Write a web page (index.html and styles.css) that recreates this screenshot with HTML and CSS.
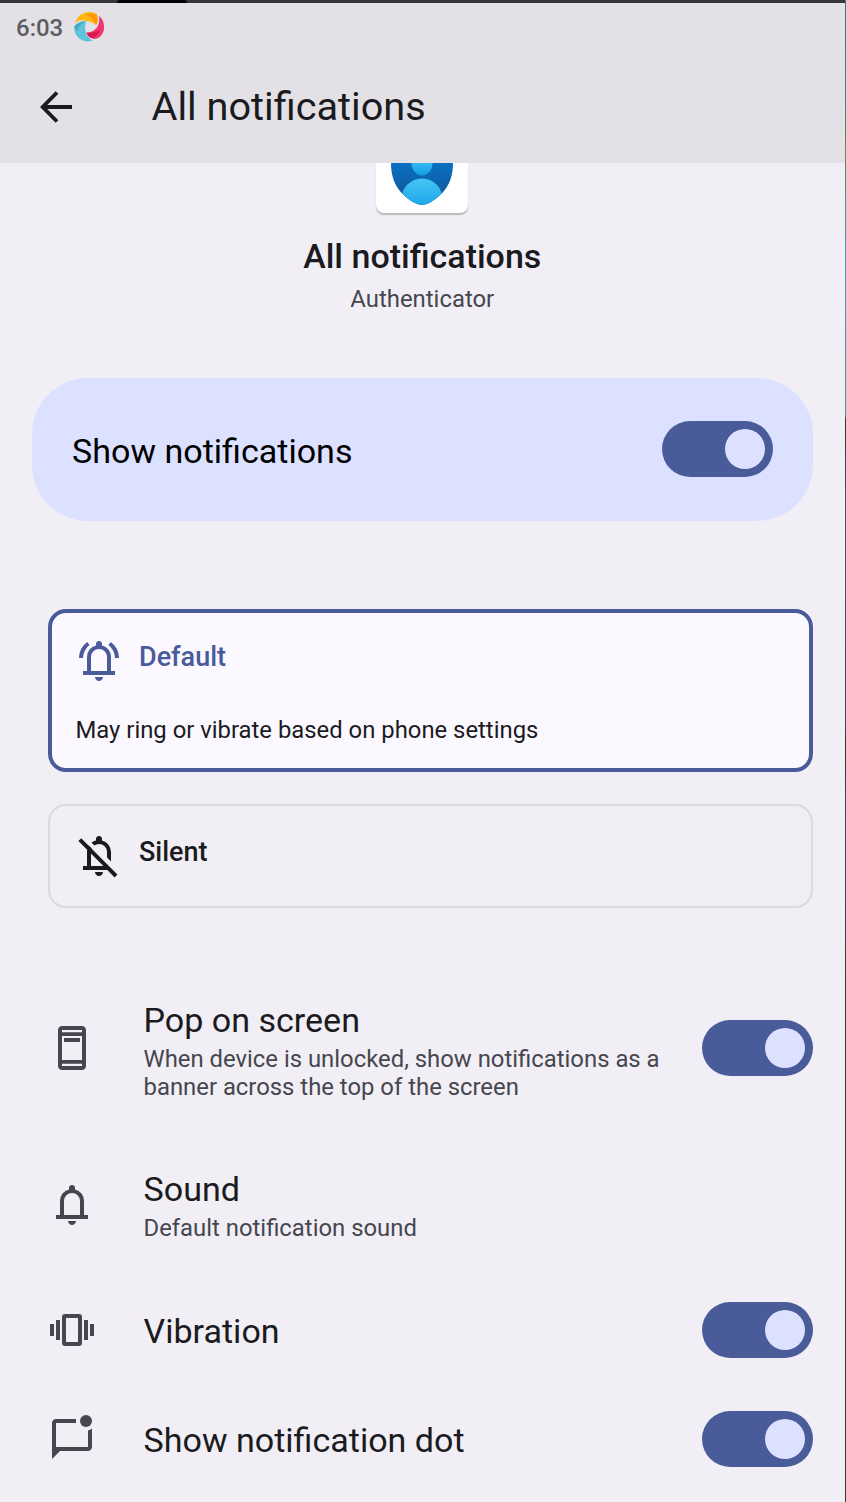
FILE: index.html
```html
<!DOCTYPE html>
<html lang="en">
<head>
<meta charset="utf-8">
<title>All notifications</title>
<link rel="stylesheet" href="styles.css">
</head>
<body>
<div class="screen">
  <header class="topbar">
    <div class="bezel"><span class="camera"></span></div>
    <div class="status">
      <span class="clock">6:03</span>
      <svg class="swirl" viewBox="0 0 30 30">
        <path fill="#fdb813" d="M1 11.500C3 4 9 0 15 0c4 0 6.500 1 7.700 2.500C24 6 24 10 22 13.500 20.500 11 17 9.500 12 9 8 7.500 4 8.500 1 11.500Z"/>
        <path fill="#ff9800" d="M11 3c4-2 9-2 11.700-.5C24 6 24 10 22 13.500 20.500 8 16 4 11 3Z"/>
        <path fill="#5fc3dc" d="M12 9.500C7 9 2.500 11 0 15c0 9 8 17 19 13.800C12 25 9.500 18 12 9.500Z"/>
        <path fill="#43a9c4" d="M12 9.500C7 9 2.500 11 0 15c2 1 3 3 3.500 6C4 15 7 11 12 9.500Z"/>
        <path fill="#f0366e" d="M25 4c4 3 5.500 8 5 13-1 6-5 10-10 10-4-1-6.500-3.500-7.500-6.500C20 21 27 14 25 4Z"/>
        <path fill="#d81b4e" d="M12.500 20.500c6 1 12-1 13.500-4-1 6-4 9-9 9.500-2.500-1-4-3.500-4.500-5.500Z"/>
      </svg>
    </div>
    <div class="toolbar">
      <svg class="back" viewBox="0 0 32 32"><path fill="none" stroke="#1b1b1f" stroke-width="3.8" d="M17 1.5 2.7 16 17 30.5M3 16h29"/></svg>
      <h1 class="title">All notifications</h1>
    </div>
  </header>

  <section class="app">
    <div class="app-icon">
      <svg class="shield" viewBox="0 0 62 43">
        <defs>
          <linearGradient id="navy" x1="0" y1="0" x2="0" y2="1"><stop offset="0" stop-color="#0a70c4"/><stop offset="1" stop-color="#14518f"/></linearGradient>
          <linearGradient id="sky" x1="0" y1="0" x2="0" y2="1"><stop offset="0" stop-color="#45c5f5"/><stop offset=".7" stop-color="#1ba4ea"/></linearGradient>
          <linearGradient id="head" x1="0" y1="0" x2="0" y2="1"><stop offset="0" stop-color="#35b9f0"/><stop offset="1" stop-color="#129ce6"/></linearGradient>
          <clipPath id="body"><path d="M0 0h62C62 22 51 32 40 39q-9 6-18 0C11 32 0 22 0 0Z"/></clipPath>
        </defs>
        <g clip-path="url(#body)">
          <path fill="url(#navy)" d="M0 0h62v43H0z"/>
          <path fill="url(#head)" d="M20.5 0h21a10.5 12.5 0 0 1-21 0Z"/>
          <circle cx="31" cy="36" r="20.5" fill="url(#sky)"/>
        </g>
      </svg>
    </div>
    <h2 class="app-title">All notifications</h2>
    <p class="app-name">Authenticator</p>
  </section>

  <section class="main-switch">
    <span class="main-label">Show notifications</span>
    <span class="toggle"></span>
  </section>

  <section class="choices">
    <div class="choice selected">
      <div class="choice-head">
        <svg class="icon" viewBox="0 0 24 24"><path d="M4 19v-2h2v-7q0-2.075 1.25-3.688Q8.5 4.7 10.5 4.2v-.7q0-.625.438-1.063Q11.375 2 12 2t1.062.437Q13.5 2.875 13.5 3.5v.7q2 .5 3.25 2.112Q18 7.925 18 10v7h2v2Zm8 3q-.825 0-1.412-.587Q10 20.825 10 20h4q0 .825-.587 1.413Q12.825 22 12 22Zm-4-5h8v-7q0-1.65-1.175-2.825Q13.65 6 12 6q-1.65 0-2.825 1.175Q8 8.35 8 10ZM2 10.5q0-2.5 1.113-4.588Q4.225 3.825 6.1 2.45l1.175 1.6q-1.5 1.1-2.387 2.775Q4 8.5 4 10.5Zm18 0q0-2-.887-3.675-.888-1.675-2.388-2.775l1.175-1.6q1.875 1.375 2.987 3.462Q22 8 22 10.500Z"/></svg>
        <span class="choice-label">Default</span>
      </div>
      <p class="choice-text">May ring or vibrate based on phone settings</p>
    </div>
    <div class="choice">
      <div class="choice-head">
        <svg class="icon" viewBox="0 0 24 24"><path d="M4 19v-2h2v-7q0-.9.2-1.75T6.950 6.700L8.450 8.200Q8.200 8.650 8.100 9.100T8 10v7h6.200L1.700 4.500l1.400-1.400 18.100 18.200-1.400 1.400L16.150 19ZM18 14.800l-2-2V10q0-1.650-1.175-2.825T12 6q-.65 0-1.250.2T9.700 6.700L8.200 5.300q.5-.4 1.100-.7t1.200-.4v-.7q0-.625.438-1.063T12 2t1.062.437T13.500 3.500v.7q2 .5 3.250 2.113T18 10Zm-6 7.200q-.825 0-1.412-.587Q10 20.825 10 20h4q0 .825-.587 1.413Q12.825 22 12 22Z"/></svg>
        <span class="choice-label">Silent</span>
      </div>
    </div>
  </section>

  <section class="list">
    <div class="row row-pop">
      <svg class="icon" viewBox="0 0 24 24"><path fill-rule="evenodd" d="M7 1h10q.825 0 1.412.588Q19 2.175 19 3v18q0 .825-.588 1.412Q17.825 23 17 23H7q-.825 0-1.412-.588Q5 21.825 5 21V3q0-.825.588-1.412Q6.175 1 7 1Zm0 2v1.100h10V3Zm0 3v12h10V6Zm0 13.900V21h10v-1.100ZM8 7h8v2H8Z"/></svg>
      <div class="words"><div class="name">Pop on screen</div><div class="detail">When device is unlocked, show notifications as a<br>banner across the top of the screen</div></div>
      <span class="toggle"></span>
    </div>
    <div class="row row-sound">
      <svg class="icon" viewBox="0 0 24 24"><path d="M4 19v-2h2v-7q0-2.075 1.25-3.688Q8.500 4.700 10.500 4.200v-.7q0-.625.438-1.063Q11.375 2 12 2t1.062.437Q13.500 2.875 13.500 3.500v.7q2 .5 3.250 2.112Q18 7.925 18 10v7h2v2Zm8 3q-.825 0-1.412-.587Q10 20.825 10 20h4q0 .825-.587 1.413Q12.825 22 12 22Zm-4-5h8v-7q0-1.650-1.175-2.825Q13.650 6 12 6q-1.650 0-2.825 1.175Q8 8.350 8 10Z"/></svg>
      <div class="words"><div class="name">Sound</div><div class="detail">Default notification sound</div></div>
    </div>
    <div class="row row-vibration">
      <svg class="icon" viewBox="0 0 24 24"><path fill-rule="evenodd" d="M1 9h2v6H1Zm3-2h2v10H4Zm14 0h2v10h-2Zm3 2h2v6h-2ZM8.500 4h7A1.500 1.500 0 0 1 17 5.500v13a1.500 1.500 0 0 1-1.500 1.500h-7A1.500 1.500 0 0 1 7 18.500v-13A1.500 1.500 0 0 1 8.500 4ZM9 6v12h6V6Z"/></svg>
      <div class="words"><div class="name">Vibration</div></div>
      <span class="toggle"></span>
    </div>
    <div class="row row-dot">
      <svg class="icon" viewBox="0 0 24 24"><path d="M2 22V4q0-.825.588-1.412Q3.175 2 4 2h10v2H4v12h16V7.800q1.150-.300 2-1V16q0 .825-.588 1.412Q20.825 18 20 18H6Z"/><circle cx="19" cy="3" r="3"/></svg>
      <div class="words"><div class="name">Show notification dot</div></div>
      <span class="toggle"></span>
    </div>
  </section>
  <div class="edge"></div>
</div>
</body>
</html>
```
FILE: styles.css
```css
* { box-sizing: border-box; }
body { margin: 0; font-family: Roboto, "Liberation Sans", sans-serif; color: #1b1b1f; }
h1, h2, p { margin: 0; font-weight: 400; }
.screen { position: relative; width: 846px; height: 1502px; overflow: hidden; background: #f1eff5; }
.topbar { height: 162.5px; background: #e3e1e6; }
.bezel { height: 3px; background: #36373b; padding-left: 117px; }
.camera { display: block; width: 70px; height: 3px; background: #000; border-radius: 8px 8px 0 0; }
.status { display: flex; align-items: center; height: 48px; padding-left: 16px; }
.clock { width: 58px; font-size: 24px; line-height: 28px; font-weight: 500; color: #5d5c60; margin-top: 2px; }
.swirl { width: 30px; height: 30px; overflow: visible; }
.toolbar { display: flex; align-items: center; height: 111.5px; padding-left: 40px; }
.back { width: 32px; height: 32px; }
.title { margin-left: 79.5px; font-size: 39.7px; line-height: 48px; }

.app { display: flex; flex-direction: column; align-items: center; height: 215.5px; padding-right: 1.5px; }
.app-icon { width: 92px; height: 50.5px; background: #fff; border-radius: 0 0 8px 8px; box-shadow: 0 1.5px 1px #b9b8bd; display: flex; justify-content: center; }
.shield { width: 62px; height: 43px; }
.app-title { margin-top: 23px; font-size: 34px; line-height: 40px; font-weight: 500; }
.app-name { margin-top: 9px; font-size: 23.9px; line-height: 28px; color: #46464f; }

.main-switch { display: flex; align-items: center; justify-content: space-between; margin: 0 33px 0 32px; height: 143px; padding: 0 40px 1px; border-radius: 56px; background: #dce1ff; color: #000; }
.main-label { font-size: 34.05px; line-height: 40px; padding-top: 4px; }
.toggle { flex: none; display: flex; align-items: center; justify-content: flex-end; width: 111px; height: 56px; padding-right: 8px; border-radius: 28px; background: #495b99; }
.toggle::after { content: ""; width: 40px; height: 40px; border-radius: 50%; background: #dce1ff; }

.choices { display: flex; flex-direction: column; gap: 32px; margin: 88px 33px 0 48px; }
.choice { height: 104px; border: 2px solid #dadae0; border-radius: 18px; padding: 26px 26px; }
.choice.selected { height: 163px; border: 4px solid #495b99; padding: 24px 24px; background: #fbf8ff; }
.choice-head { display: flex; }
.icon { flex: none; width: 48px; height: 48px; fill: currentColor; }
.choice-head .icon { margin-left: -1px; }
.choice-label { margin-left: 16px; padding-top: 5px; font-size: 27px; line-height: 30px; font-weight: 500; }
.selected .choice-head { color: #495b99; }
.choice-text { margin-top: 31px; margin-left: -0.5px; font-size: 23.85px; line-height: 28px; }

.list { margin: 66px 33px 0 48px; }
.row { display: flex; align-items: center; color: #46464f; }
.row .icon { margin-left: -0.5px; }
.words { flex: 1; margin-left: 48px; padding-top: 2px; }
.name { font-size: 34.05px; line-height: 40px; color: #1b1b1f; }
.detail { font-size: 23.87px; line-height: 28px; margin-top: 5px; white-space: nowrap; }
.row-pop { height: 148px; }
.row-pop .words { padding-top: 4px; }
.row-sound { height: 165px; }
.row-vibration { height: 86px; }
.row-vibration .toggle { margin-top: -1px; }
.row-dot { height: 132px; }
.edge { position: absolute; right: 0; top: 0; width: 1px; height: 1502px; background: linear-gradient(#35759b 0, #5a8a6c 160px, #4a93b8 250px, #568c9c 415px, #2e3338 420px, #46566a 500px, #45486a 720px, #2e3036 745px, #454868 820px, #36373b 1000px); }
```
